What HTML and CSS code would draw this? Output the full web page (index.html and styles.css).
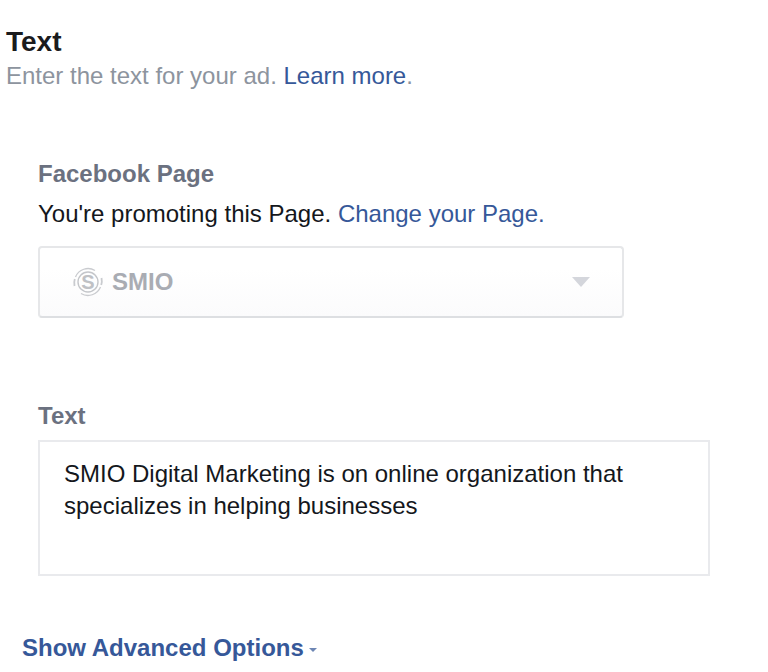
FILE: index.html
```
<!DOCTYPE html>
<html lang="en">
<head>
<meta charset="utf-8">
<title>Text</title>
<link rel="stylesheet" href="styles.css">
</head>
<body>
<main class="page">
  <header class="head">
    <h1 class="title">Text</h1>
    <p class="sub">Enter the text for your ad. <a class="link" href="#">Learn more</a>.</p>
  </header>
  <section class="fields">
    <h2 class="label">Facebook Page</h2>
    <p class="promo">You're promoting this Page. <a class="link" href="#">Change your Page.</a></p>
    <div class="select">
      <svg class="logo" width="32" height="32" viewBox="0 0 32 32" aria-hidden="true">
        <path d="M3.500 11A13.500 13.500 0 0 1 23 4.500" fill="none" stroke="#c9cbcf" stroke-width="1.300"/>
        <path d="M28.500 21A13.500 13.500 0 0 1 9 27.500" fill="none" stroke="#c9cbcf" stroke-width="1.300"/>
        <path d="M2.500 20A13.500 13.500 0 0 1 2.800 13" fill="none" stroke="#c9cbcf" stroke-width="1.800"/>
        <path d="M29.500 12A13.500 13.500 0 0 1 29.200 19" fill="none" stroke="#c9cbcf" stroke-width="1.800"/>
        <circle cx="16" cy="16" r="10" fill="none" stroke="#c4c6ca" stroke-width="1.400"/>
        <text x="16" y="22.500" class="logo-s">S</text>
      </svg>
      <span class="select-name">SMIO</span>
      <span class="caret"></span>
    </div>
    <h2 class="label label-text">Text</h2>
    <div class="textbox">SMIO Digital Marketing is on online organization that specializes in helping businesses</div>
  </section>
  <a class="advanced" href="#">Show Advanced Options<span class="mini-caret"></span></a>
</main>
</body>
</html>
```
FILE: styles.css
```
* { box-sizing: border-box; }
html, body { margin: 0; padding: 0; background: #fff; }
body {
  width: 768px;
  height: 672px;
  overflow: hidden;
  font-family: "Liberation Sans", Arial, sans-serif;
  color: #1d2129;
}
.page { padding-top: 26px; display: flex; flex-direction: column; }
.head { padding-left: 6px; }
.title { margin: 0; font-size: 28px; line-height: 32px; font-weight: 700; color: #1a1b1d; }
.sub { margin: 2px 0 0; font-size: 24px; line-height: 32px; color: #8d949e; }
.link { color: #365899; text-decoration: none; }
.fields { padding: 0 0 0 38px; margin-top: 66px; }
.label { margin: 0; font-size: 24px; line-height: 32px; font-weight: 700; color: #6b7180; }
.promo { margin: 8px 0 0; font-size: 24px; line-height: 32px; color: #14171c; }
.select {
  margin-top: 16px;
  width: 586px;
  height: 72px;
  display: flex;
  align-items: center;
  padding: 0 32px 0 33px;
  border: 2px solid #e6e7e9;
  border-bottom-color: #dddfe2;
  border-radius: 4px;
  background: linear-gradient(#fff 30%, #fbfbfc);
}
.logo { flex: none; width: 32px; height: 32px; margin-left: -1px; }
.logo-s { font-size: 20px; font-weight: 700; text-anchor: middle; fill: #bfc1c5; font-family: "Liberation Sans", Arial, sans-serif; }
.select-name { margin-left: 8px; font-size: 24px; font-weight: 700; color: #a9acb3; }
.caret {
  margin-left: auto;
  width: 0;
  height: 0;
  border-left: 9px solid transparent;
  border-right: 9px solid transparent;
  border-top: 10px solid #d4d6dc;
}
.label-text { margin-top: 82px; }
.textbox {
  margin-top: 8px;
  width: 672px;
  height: 136px;
  padding: 16px 24px;
  border: 2px solid #e9eaed;
  font-size: 24px;
  line-height: 32px;
  color: #14171c;
}
.advanced {
  margin: 56px 0 0 22px;
  font-size: 24px;
  line-height: 32px;
  font-weight: 700;
  color: #365899;
  text-decoration: none;
  display: flex;
  align-items: center;
}
.mini-caret {
  margin: 4px 0 0 5px;
  width: 0;
  height: 0;
  border-left: 4.500px solid transparent;
  border-right: 4.500px solid transparent;
  border-top: 4.500px solid #6d86b4;
}
```
